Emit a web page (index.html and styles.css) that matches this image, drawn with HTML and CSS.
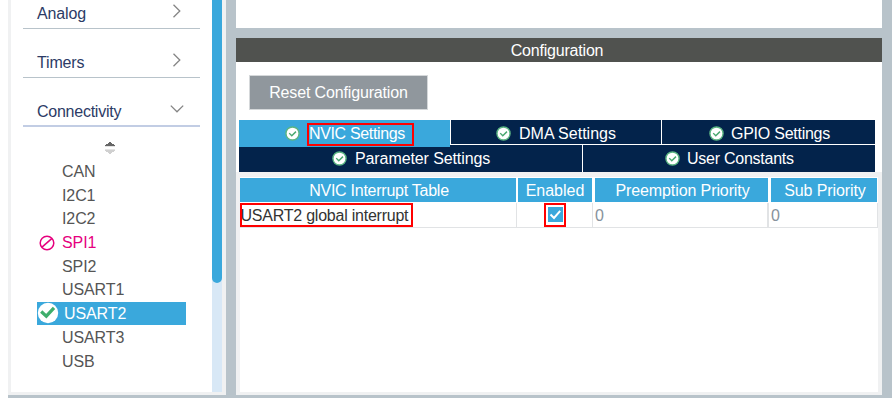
FILE: index.html
```html
<!DOCTYPE html>
<html lang="en">
<head>
<meta charset="utf-8">
<title>Configuration</title>
<link rel="stylesheet" href="styles.css">
</head>
<body>
<svg class="defs" width="0" height="0">
  <symbol id="ok" viewBox="0 0 16 16">
    <circle cx="8" cy="8" r="7" fill="#fff" stroke="#5cb583" stroke-width="1.5"/>
    <path d="M4.5 7.6 L7.2 10.3 L11.7 6" fill="none" stroke="#4aa870" stroke-width="1.5"/>
  </symbol>
</svg>
<div class="app">
  <aside class="side">
    <div class="categories">
      <div class="cat"><span>Analog</span><svg width="8" height="14" viewBox="0 0 8 14"><path d="M.5 .8 L6.8 7 L.5 13.2"/></svg></div>
      <div class="cat"><span>Timers</span><svg width="8" height="14" viewBox="0 0 8 14"><path d="M.5 .8 L6.8 7 L.5 13.2"/></svg></div>
      <div class="cat open"><span>Connectivity</span><svg width="14" height="8" viewBox="0 0 14 8"><path d="M.8 .6 L7 6.8 L13.2 .6"/></svg></div>
      <svg class="sort" width="12" height="14" viewBox="0 0 12 14"><path d="M1 5 V4 H2 V3 H4 V2 H5 V1 H7 V2 H8 V3 H10 V4 H11 V5Z" fill="#666"/><path d="M1 5 H11 V6 H1Z M1 8 H11 V9 H1Z" fill="#e4e4e4"/><path d="M1 9 H11 V10 H10 V11 H8 V12 H7 V13 H5 V12 H4 V11 H2 V10 H1Z" fill="#d0d0d0"/></svg>
      <ul class="list">
        <li>CAN</li>
        <li>I2C1</li>
        <li>I2C2</li>
        <li class="blocked"><svg width="16" height="16" viewBox="0 0 16 16"><circle cx="8" cy="8" r="6.8"/><path d="M2.7 12.4 L13 3.4"/></svg>SPI1</li>
        <li>SPI2</li>
        <li>USART1</li>
        <li class="active"><svg width="22" height="22" viewBox="0 0 22 22"><circle cx="11" cy="11" r="10.2" fill="#fff"/><path d="M4.2 9.5 L9.3 14.2 L17 5.8" fill="none" stroke="#3fae6c" stroke-width="3.2"/></svg>USART2</li>
        <li>USART3</li>
        <li>USB</li>
      </ul>
    </div>
    <div class="scroll"><div class="thumb"></div></div>
  </aside>
  <main class="main">
    <div class="upper"></div>
    <section class="config">
      <h1><span>Configuration</span></h1>
      <div class="tools"><button>Reset Configuration</button></div>
      <div class="tabs">
        <div class="tab-row">
          <div class="tab current"><svg><use href="#ok"/></svg><span>NVIC Settings</span><i class="mark mark-tab"></i></div>
          <div class="tab dma"><svg><use href="#ok"/></svg><span>DMA Settings</span></div>
          <div class="tab gpio"><svg><use href="#ok"/></svg><span>GPIO Settings</span></div>
        </div>
        <div class="tab-row second">
          <div class="tab param"><svg><use href="#ok"/></svg><span>Parameter Settings</span></div>
          <div class="tab user"><svg><use href="#ok"/></svg><span>User Constants</span></div>
        </div>
      </div>
      <div class="pane">
        <div class="table">
          <div class="row head"><div class="interrupt">NVIC Interrupt Table</div><div>Enabled</div><div class="preempt">Preemption Priority</div><div class="sub">Sub Priority</div></div>
          <div class="row body">
            <div class="name"><span>USART2 global interrupt</span><i class="mark mark-name"></i></div>
            <div class="check"><svg width="15" height="15" viewBox="0 0 15 15"><rect width="15" height="15" fill="#3aa8dc"/><path d="M2.5 7.5 L6 11 L12.2 3.8" fill="none" stroke="#fff" stroke-width="2"/></svg><i class="mark mark-check"></i></div>
            <div class="num">0</div>
            <div class="num">0</div>
          </div>
        </div>
      </div>
    </section>
  </main>
</div>
</body>
</html>
```

FILE: styles.css
```css
* { box-sizing: border-box; }
body { margin: 0; width: 893px; height: 409px; overflow: hidden; background: #fff; font: 16px/24px "Liberation Sans", Arial, sans-serif; }
.defs { display: block; }
.app { display: flex; gap: 10px; width: 884px; height: 398px; margin-left: 8px; padding: 0 10px 3px 0; background: #b8c3ca; }
.side { display: flex; width: 218px; padding: 0 4px 3px 3px; background: #f0f1f2; }
.categories { flex: 1; background: #fff; }
.scroll { width: 10px; background: #d8e8f6; }
.thumb { height: 283px; background: #3aa8dc; border-radius: 0 0 5px 5px; }
.cat { display: flex; justify-content: space-between; width: 177px; height: 49px; margin-left: 12px; padding: 22px 19px 0 14px; border-bottom: 1px solid #b8c3ca; color: #2c3b66; letter-spacing: -.15px; }
.cat:first-child { height: 29px; padding-top: 2px; }
.cat svg { margin-top: 2px; fill: none; stroke: #858585; stroke-width: 1.3; }
.cat.open { padding-right: 16px; border-bottom: 2px solid #c2cde4; letter-spacing: -.25px; }
.cat.open svg { margin-top: 5px; }
.sort { display: block; margin: 14px 0 0 93px; }
.list { margin: 5.1px 0 0 26px; padding: 0; width: 149px; list-style: none; color: #555; letter-spacing: -.1px; }
.list li { display: flex; align-items: center; height: 23.7px; padding-left: 25px; }
.list svg { flex: none; margin-top: -1px; }
.list .blocked { padding-left: 2px; gap: 7px; color: #e6007e; }
.blocked svg { fill: none; stroke: #e6007e; stroke-width: 1.5; }
.list .active { height: 23px; margin-bottom: 1px; padding-left: 0; gap: 5px; background: #3aa8dc; color: #fff; }
.main { display: flex; flex-direction: column; gap: 10px; width: 646px; }
.upper { height: 28px; background: #fff; }
.config { display: flex; flex-direction: column; flex: 1; background: #fff; }
h1 { margin: 0; height: 24px; padding: 1px 4px 0 0; background: #50524f; color: #fff; font: inherit; letter-spacing: -.2px; text-align: center; }
.tools { height: 58px; padding: 13px 0 0 13px; }
button { width: 179px; height: 35px; padding: 0; border: 1px solid #d5d8da; background: #90979d; color: #fff; font: inherit; letter-spacing: -.15px; }
.tabs { width: 636px; margin-left: 3px; }
.tab-row { display: flex; gap: 1px; height: 25px; }
.tab-row.second { height: 27px; }
.tab { display: flex; position: relative; gap: 8px; height: 24px; padding-left: 45px; background: #03234b; color: #fff; line-height: 27px; white-space: nowrap; }
.tab svg { flex: none; width: 15px; height: 15px; margin-top: 6px; }
.current { z-index: 1; gap: 9px; width: 211px; height: 27px; padding-left: 46px; background: #3aa8dc; letter-spacing: -.35px; }
.dma { width: 210px; }
.gpio { flex: 1; gap: 7px; padding-left: 47px; letter-spacing: -.25px; }
.second .tab { height: 27px; }
.second .param { width: 343px; padding-left: 93px; letter-spacing: -.1px; }
.second .user { flex: 1; gap: 7px; padding-left: 82px; letter-spacing: -.25px; }
.pane { flex: 1; padding: 5px 4px 3px; background: #f0f1f2; }
.table { height: 100%; padding-top: 1px; background: #fff; }
.row { display: grid; }
.head { grid-template: 24px / 276px 74px 173px 106px; column-gap: 3px; width: 638px; margin-bottom: 1px; color: #fff; text-align: center; line-height: 25px; }
.head div { background: #3aa8dc; }
.head div + div { margin: 0 1px 0 -1px; }
.head .interrupt { padding-left: 2px; letter-spacing: -.25px; }
.head .preempt { padding-left: 2px; letter-spacing: -.1px; }
.head .sub { padding-left: 2px; letter-spacing: -.1px; }
.body { grid-template-columns: 277px 76px 176px 109px; height: 25px; border-bottom: 1px solid #e1e3e5; }
.body > div { position: relative; border-right: 1px solid #e1e3e5; line-height: 25px; }
.body > .num:nth-child(3) { border-right-width: 2px; }
.name { padding-left: .5px; color: #333; letter-spacing: -.23px; }
.check svg { display: block; margin: 4px 0 0 31px; }
.num { padding-left: 2px; color: #87929c; }
.mark { position: absolute; border: 2px solid #f00; }
.mark-tab { left: 68px; top: 3px; width: 107px; height: 23px; }
.mark-name { left: 0; top: 0; width: 173px; height: 24px; }
.mark-check { left: 27px; top: 0; width: 22px; height: 24px; }
```
